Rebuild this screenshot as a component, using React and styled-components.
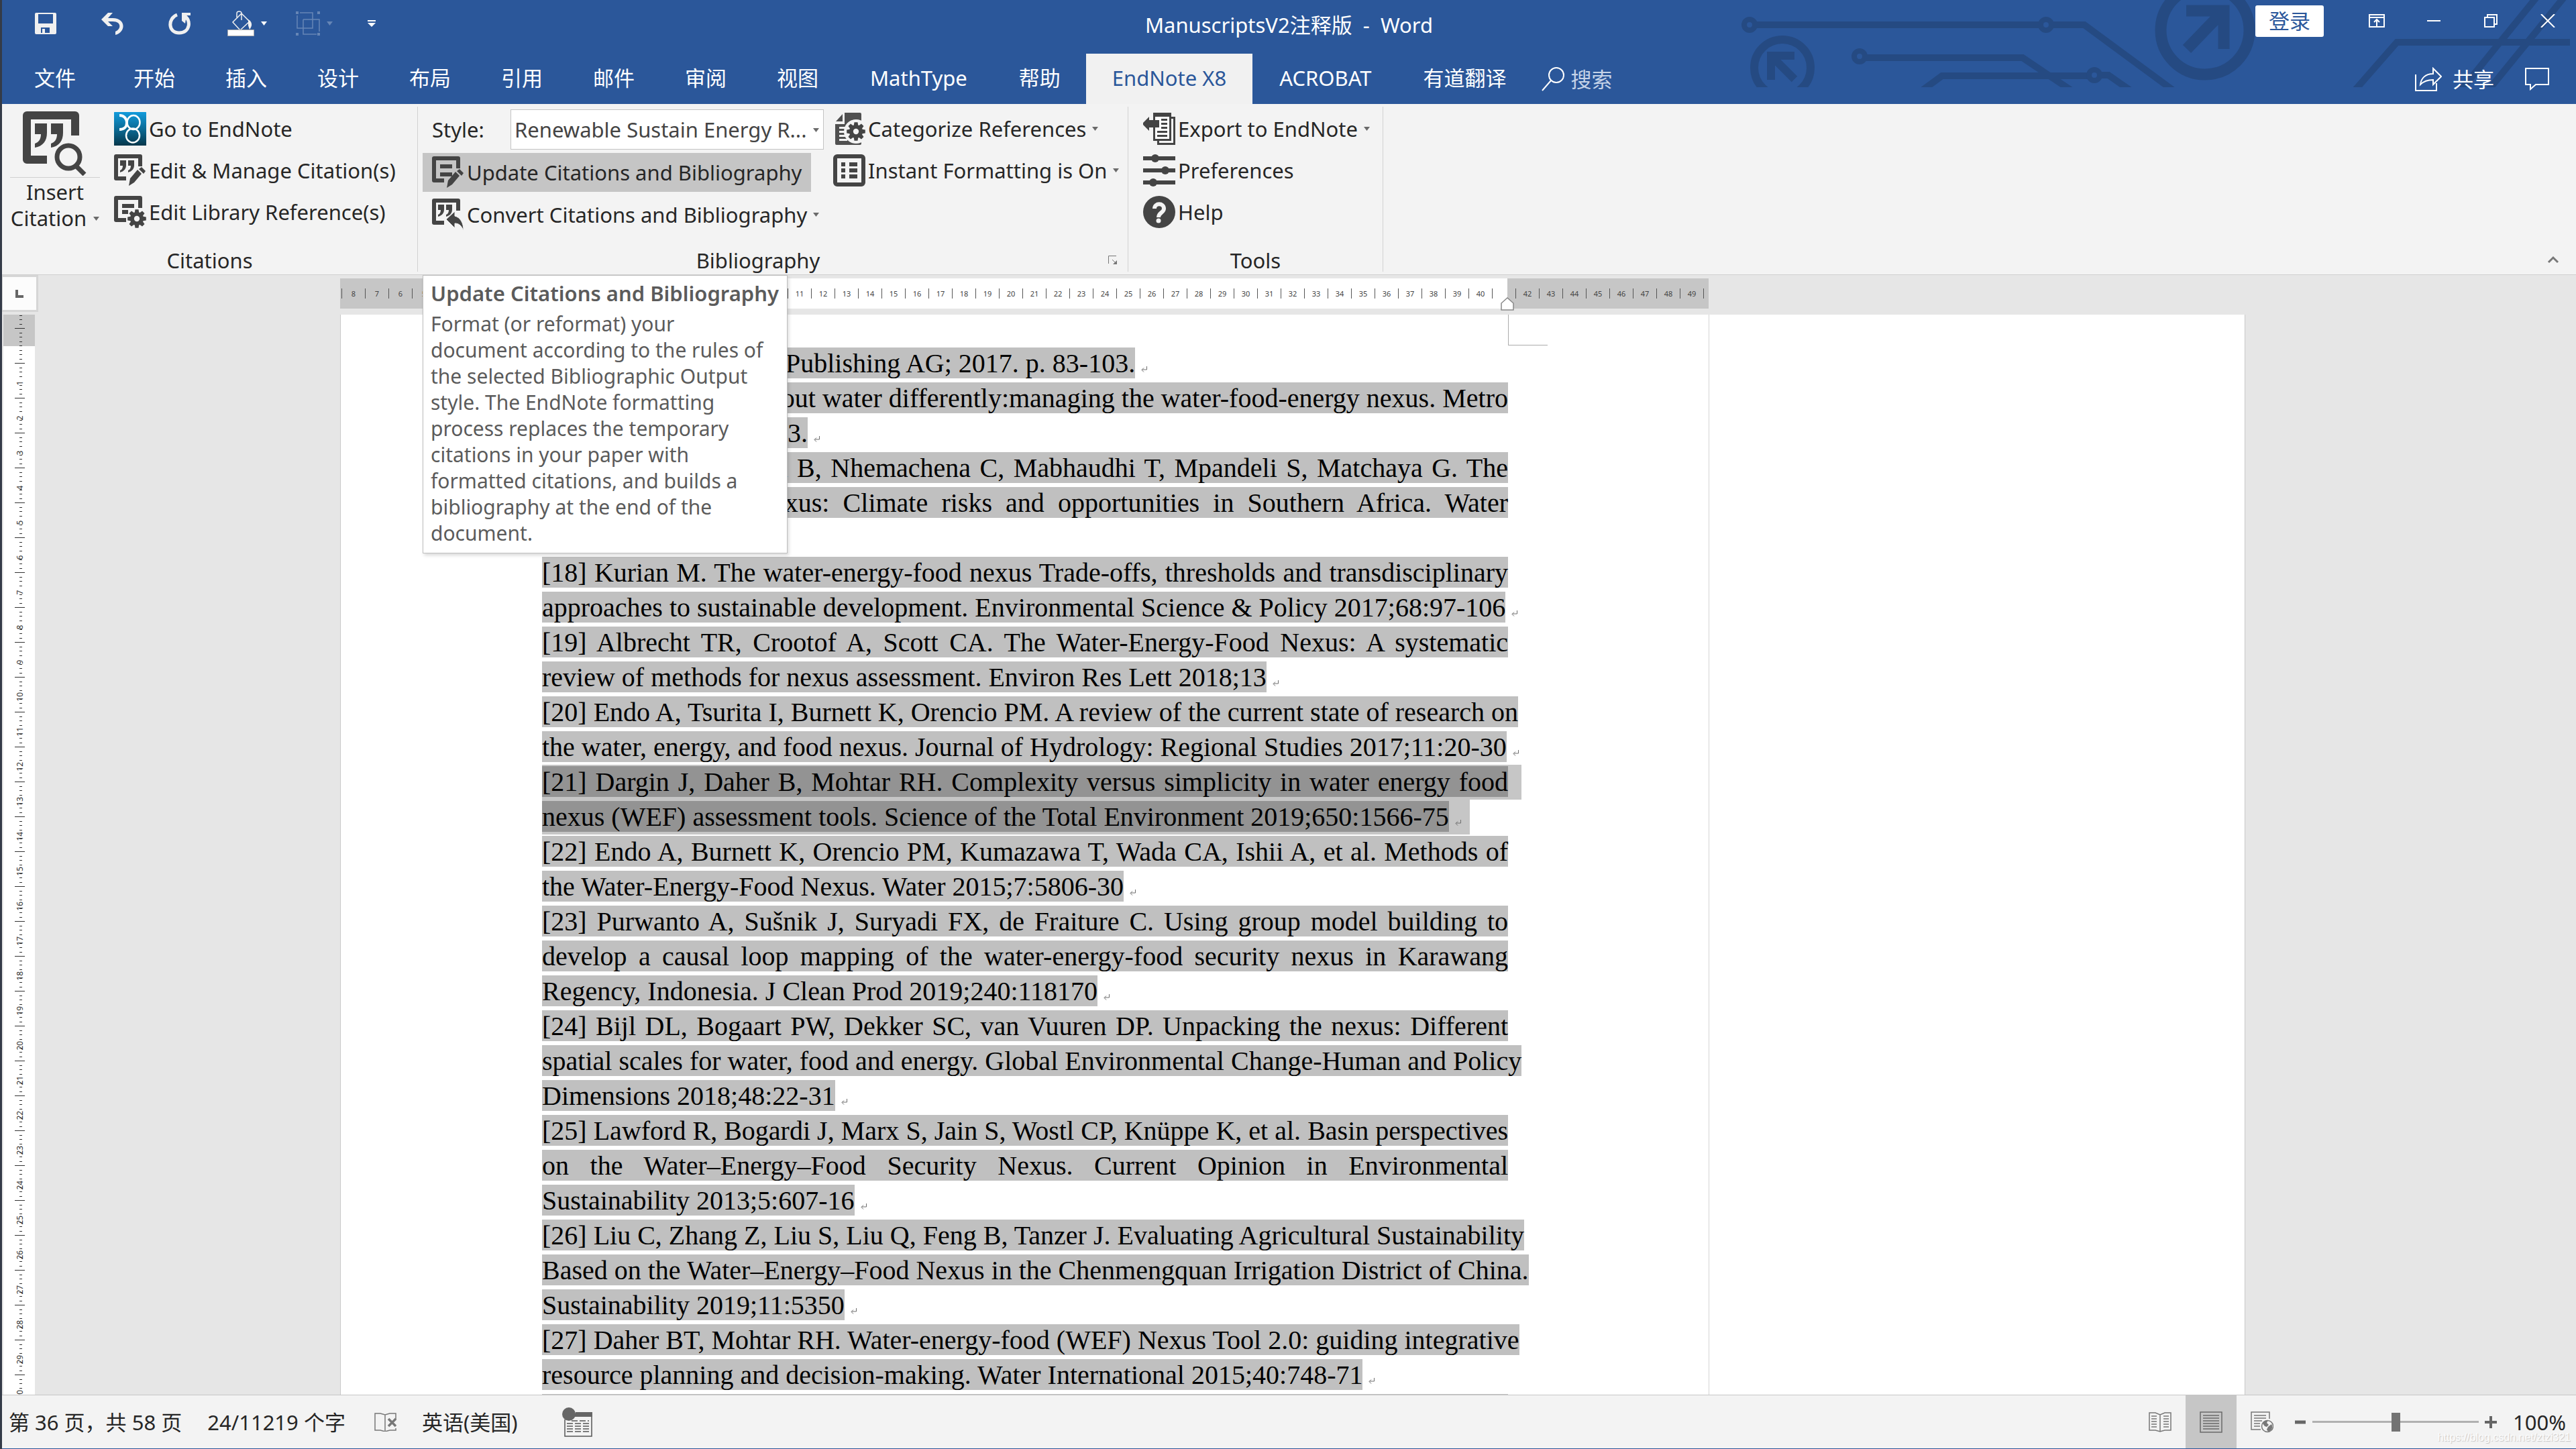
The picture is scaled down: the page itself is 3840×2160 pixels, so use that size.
import React from "react";
import styled, { createGlobalStyle, css } from "styled-components";

const ui = `"Noto Sans", "Noto Sans CJK SC", sans-serif`;
const blue = "#2b579a";
const ink = "#444444";

const Global = createGlobalStyle`
  * { box-sizing: border-box; }
  html, body { margin: 0; padding: 0; }
  body { font-family: ${ui}; font-size: 31px; line-height: 40px; color: #262626; overflow: hidden; }
  button, select, input { font: inherit; color: inherit; margin: 0; }
  svg { display: block; flex: none; }
`;

const Shell = styled.div`
  height: 100vh;
  display: flex;
  flex-direction: column;
  background: #e6e6e6;
  border-left: 3px solid #343b48;
`;

/* ---------- header ---------- */
const Header = styled.header`
  position: relative;
  background: ${blue};
  color: #fff;
`;
const Circuit = styled.svg`
  position: absolute;
  right: 0;
  top: 0;
`;
const TitleBar = styled.div`
  position: relative;
  display: grid;
  grid-template-columns: 1fr auto 1fr;
  height: 80px;
`;
const QuickAccess = styled.div`
  display: flex;
  height: 70px;
  padding-left: 15px;
`;
const PlainButton = styled.button`
  border: 0;
  background: none;
  padding: 0;
  display: flex;
  align-items: center;
  justify-content: center;
  white-space: nowrap;
`;
const QuickButton = styled(PlainButton)`
  width: ${(p) => (p.$narrow ? 72 : 100)}px;
  gap: 10px;
  opacity: ${(p) => (p.$dim ? 0.28 : 1)};
`;
const DocTitle = styled.h1`
  margin: 0;
  font-size: 31px;
  line-height: 74px;
  font-weight: 400;
  white-space: pre;
`;
const WindowArea = styled.div`
  display: flex;
  align-items: center;
  justify-content: flex-end;
  height: 62px;
`;
const SignIn = styled(PlainButton)`
  background: #fff;
  color: ${blue};
  width: 102px;
  height: 47px;
  border-radius: 3px;
  margin-right: 36px;
`;
const WindowButton = styled(PlainButton)`
  width: 85px;
  height: 62px;
`;
const TabRow = styled.nav`
  position: relative;
  display: flex;
  height: 75px;
  gap: 1px;
`;
const tabPadding = { file: 48, latin: 39, cjk: 37 };
const Tab = styled(PlainButton)`
  padding: 0 ${(p) => tabPadding[p.$kind]}px 4px;
  color: ${(p) => (p.$active ? blue : "#fff")};
  background: ${(p) => (p.$active ? "#f1f1f1" : "none")};
`;
const Search = styled(PlainButton)`
  margin-left: 14px;
  gap: 10px;
  color: #c5d3e8;
`;
const ShareArea = styled.div`
  display: flex;
  align-items: center;
  gap: 46px;
  margin-left: auto;
  padding-right: 40px;
`;
const ShareButton = styled(PlainButton)`
  gap: 16px;
`;

/* ---------- ribbon ---------- */
const Ribbon = styled.section`
  display: flex;
  height: 255px;
  padding: 4px 0;
  background: #f3f3f3;
  border-bottom: 1px solid #cfcfcf;
`;
const Group = styled.div`
  display: flex;
  flex-direction: column;
  flex: 0 0 ${(p) => p.$width}px;
  border-right: 1px solid #d2d2d2;
`;
const GroupBody = styled.div`
  display: flex;
  flex: 1;
  align-items: flex-start;
  padding-left: ${(p) => p.$inset}px;
  gap: ${(p) => p.$gap || 0}px;
`;
const GroupFooter = styled.div`
  display: flex;
  align-items: center;
  height: 40px;
  margin-bottom: -3px;
`;
const GroupLabel = styled.div`
  flex: 1;
  text-align: center;
`;
const Launcher = styled(PlainButton)`
  width: 44px;
  height: 40px;
`;
const Column = styled.div`
  display: flex;
  flex-direction: column;
  align-items: flex-start;
  padding-top: ${(p) => (p.$spaced ? 4 : 2)}px;
  gap: ${(p) => (p.$spaced ? 5 : 0)}px;
  ${(p) => p.$spaced && css`flex: 0 0 598px; min-width: 0;`}
`;
const Command = styled(PlainButton)`
  height: ${(p) => (p.$boxed ? 58 : 62)}px;
  gap: 4px;
  ${(p) => p.$boxed && css`padding: 0 14px;`}
  background: ${(p) => (p.$hot ? "#c5c5c5" : "none")};
`;
const Drop = styled.span`
  display: flex;
  padding-left: 5px;
`;
const BigCommand = styled(PlainButton)`
  flex-direction: column;
  width: 134px;
  padding-top: 7px;
`;
const BigLabel = styled.span`
  width: 100%;
  margin-top: 2px;
  padding-top: 2px;
  border-top: 1px solid #d0d0d0;
  line-height: 39px;
`;
const BigLine = styled.span`
  display: flex;
  align-items: center;
  justify-content: center;
  gap: 10px;
`;
const StyleRow = styled.div`
  display: flex;
  align-items: center;
  width: 100%;
  height: 60px;
  padding-left: 14px;
  justify-content: space-between;
`;
const SelectWrap = styled.div`
  position: relative;
  width: 467px;
`;
const StyleSelect = styled.select`
  appearance: none;
  display: block;
  width: 100%;
  height: 60px;
  padding: 0 0 0 5px;
  border: 1px solid #c3c3c3;
  border-radius: 0;
  background: #fff;
  color: #444;
`;
const SelectArrow = styled.span`
  position: absolute;
  right: 7px;
  top: 28px;
  pointer-events: none;
`;
const Collapse = styled(PlainButton)`
  margin-left: auto;
  align-self: flex-end;
  width: 68px;
  height: 36px;
`;

/* ---------- workspace ---------- */
const Workspace = styled.main`
  position: relative;
  flex: 1;
  min-height: 0;
  display: grid;
  grid-template-columns: 54px 1fr;
  grid-template-rows: 59px 1fr;
  overflow: hidden;
`;
const Corner = styled.div`
  display: flex;
  align-items: center;
  justify-content: center;
  height: 55px;
  background: #fcfcfc;
  border: solid #d6d6d6;
  border-width: 3px 3px 3px 1px;
`;
const Track = styled.div`
  display: flex;
  justify-content: center;
  padding-right: 43px;
  min-height: 0;
`;
const RulerSpan = styled.div`
  width: 2840px;
  padding-top: 5px;
`;
const HRuler = styled.div`
  position: relative;
  display: flex;
  align-items: center;
  width: 2040px;
  height: 45px;
  padding-left: 2px;
  background: linear-gradient(90deg, #c6c6c6 300px, #fff 300px, #fff 1740px, #c6c6c6 1740px);
`;
const HCell = styled.span`
  flex: 0 0 35px;
  height: 15px;
  border-left: 1px solid #555;
  color: #444;
  font-size: 11px;
  line-height: 15px;
  text-align: center;
`;
const Indent = styled.svg`
  position: absolute;
  left: 1730px;
  top: 28px;
`;
const VRuler = styled.div`
  margin: 0 5px 0 2px;
  min-height: 0;
  overflow: hidden;
  background: linear-gradient(#c6c6c6 47px, #fff 47px);
`;
const VUnits = styled.div`
  margin-top: -32px;
`;
const VUnit = styled.div`
  display: grid;
  grid-template-rows: repeat(8, 1fr);
  grid-template-columns: 47px;
  height: 52px;
  padding-left: 17px;
`;
const VTick = styled.i`
  grid-row: ${(p) => p.$row};
  grid-column: 1;
  height: 1px;
  width: ${(p) => (p.$long ? 15 : 4)}px;
  margin-left: ${(p) => (p.$long ? 0 : 7)}px;
  background: #333;
`;
const VNumber = styled.span`
  grid-row: 4 / 7;
  grid-column: 1;
  width: 15px;
  writing-mode: vertical-rl;
  transform: rotate(180deg);
  text-align: center;
  font-size: 12px;
  line-height: 15px;
  color: #333;
`;
const Pages = styled.div`
  display: flex;
  width: 2840px;
  background: #fff;
  border: solid #c8c8c8;
  border-width: 0 1px;
`;
const Sheet = styled.article`
  position: relative;
  flex: 0 0 2040px;
  padding: 47px 299px 0 300px;
  border-right: 1px solid #d4d4d4;
  font-family: "Liberation Serif", serif;
  font-size: 40px;
  line-height: 52px;
  color: #000;
  overflow: hidden;
`;
const MarginMark = styled.i`
  position: absolute;
  right: 240px;
  top: 0;
  width: 59px;
  height: 46px;
  border: solid #ababab;
  border-width: 0 0 1px 1px;
`;
const Line = styled.div`
  height: 52px;
  white-space: nowrap;
  ${(p) => p.$full && css`text-align-last: justify;`}
  ${(p) => p.$picked && css`
    width: ${p.$full ? "calc(100% + 20px)" : "fit-content"};
    padding-right: ${p.$full ? 20 : 13}px;
    background: #c6c6c6;
  `}
`;
const Field = styled.span`
  padding: 1px 0 0 ${(p) => p.$lead || 0}px;
  background: ${(p) => (p.$picked ? "#939393" : "#c0c0c0")};
  ${(p) => p.$block && css`display: block; margin-top: 2px;`}
`;
const Return = styled.svg`
  display: inline-block;
  margin-left: 9px;
`;
const Tooltip = styled.aside`
  position: absolute;
  z-index: 2;
  left: 627px;
  top: 0;
  width: 544px;
  padding: 7px 0 10px 11px;
  background: #fff;
  border: 1px solid #bebebe;
  box-shadow: 2px 3px 5px rgba(0, 0, 0, 0.15);
  color: #5b5b5b;
  font-size: 30px;
  line-height: 39px;
  white-space: nowrap;
`;
const TipTitle = styled.h2`
  margin: 0 0 6px;
  font-size: 31px;
  line-height: 39px;
  font-weight: 600;
`;
const TipBody = styled.p`
  margin: 0;
`;

/* ---------- status bar ---------- */
const Status = styled.footer`
  display: flex;
  align-items: center;
  height: 81px;
  background: #f3f3f3;
  border-top: 1px solid #c6c6c6;
  border-bottom: 1px solid ${blue};
`;
const StatusInfo = styled.div`
  display: flex;
  align-items: center;
  padding-left: 10px;
  gap: 38px;
  white-space: nowrap;
`;
const ProofButton = styled(PlainButton)`
  margin-left: 5px;
`;
const MacroButton = styled(PlainButton)`
  margin-left: 28px;
`;
const StatusView = styled.div`
  position: relative;
  display: flex;
  align-items: center;
  align-self: stretch;
  margin-left: auto;
  padding-right: 15px;
`;
const ViewButton = styled(PlainButton)`
  width: 76px;
  align-self: stretch;
  background: ${(p) => (p.$active ? "#c6c6c6" : "none")};
`;
const ZoomOut = styled(PlainButton)`
  margin: 0 10px 0 11px;
`;
const ZoomIn = styled(PlainButton)`
  margin: 0 24px 0 9px;
`;
const ZoomRange = styled.input`
  appearance: none;
  width: 248px;
  height: 28px;
  background: linear-gradient(#b0b0b0, #b0b0b0) center / 100% 3px no-repeat;
  &::-webkit-slider-thumb {
    appearance: none;
    width: 13px;
    height: 28px;
    background: #737373;
  }
`;
const Watermark = styled.span`
  position: absolute;
  right: 8px;
  bottom: 2px;
  font: 16px/28px "Liberation Sans", sans-serif;
  color: #fdfdfd;
  text-shadow: 1px 1px 1px #c4c4c4;
`;

/* ---------- icons ---------- */
const Caret = ({ color = "#6a6a6a" }) => (
  <svg width="9" height="6" viewBox="0 0 9 6"><path d="M0 0h9L4.500 6z" fill={color} /></svg>
);

const gearPoints = (cx, cy, r, teeth = 8) => {
  const pts = [];
  for (let i = 0; i < teeth; i++) {
    const a = (i / teeth) * Math.PI * 2 - Math.PI / 2;
    [[-0.32, 0.72], [-0.18, 1], [0.18, 1], [0.32, 0.72]].forEach(([d, k]) =>
      pts.push(`${(cx + Math.cos(a + d) * r * k).toFixed(1)},${(cy + Math.sin(a + d) * r * k).toFixed(1)}`)
    );
  }
  return pts.join(" ");
};
const Gear = ({ cx, cy, r, hole }) => (
  <>
    <polygon points={gearPoints(cx, cy, r)} fill={ink} />
    <circle cx={cx} cy={cy} r={r * 0.3} fill={hole} />
  </>
);
const Frame = () => <path d="M39 18V3H3V36H18" fill="none" stroke={ink} strokeWidth="6" strokeLinejoin="round" />;
const Quotes = () => (
  <path fill={ink} d="M9 9h9v7c0 6-3 9-9 11v-3c3-1 4-4 4-7H9zM21 9h9v7c0 6-3 9-9 11v-3c3-1 4-4 4-7h-4z" />
);
const Pencil = () => (
  <>
    <path d="M24 36l11-13 6 6-11 13-8 5z" fill={ink} />
    <path d="M37 22l4-3 6 6-3 4z" fill={ink} />
  </>
);
const Icon48 = ({ children }) => <svg width="48" height="48" viewBox="0 0 48 48">{children}</svg>;

const InsertIcon = () => (
  <svg width="96" height="96" viewBox="0 0 96 96">
    <path d="M78 36V6H6V72H36" fill="none" stroke={ink} strokeWidth="12" strokeLinejoin="round" />
    <path fill={ink} d="M18 18h18v14c0 12-6 20-18 22v-6c6-2 9-7 9-14h-9zM42 18h18v14c0 12-6 20-18 22v-6c6-2 9-7 9-14h-9z" />
    <circle cx="68" cy="68" r="17" fill="#f3f3f3" stroke={ink} strokeWidth="7" />
    <path d="M80 82L92 94" stroke={ink} strokeWidth="7" />
  </svg>
);
const EndNoteIcon = () => (
  <svg width="48" height="50" viewBox="1 0 48 50">
    <defs>
      <linearGradient id="en" x1="0" y1="0" x2="0" y2="1">
        <stop offset="0" stopColor="#129bdc" /><stop offset="0.55" stopColor="#0a668f" /><stop offset="1" stopColor="#05374b" />
      </linearGradient>
    </defs>
    <rect width="50" height="50" rx="2" fill="url(#en)" />
    <g fill="none" stroke="#fff">
      <ellipse cx="30" cy="15.500" rx="9.500" ry="10.500" strokeWidth="2.500" />
      <ellipse cx="29" cy="35" rx="10" ry="10.500" strokeWidth="2.500" />
      <path d="M9 5c8 0 11 6 11 11S17 26 9 26" strokeWidth="4" />
    </g>
  </svg>
);
const EditCiteIcon = () => <Icon48><Frame /><Quotes /><Pencil /></Icon48>;
const EditLibIcon = () => (
  <Icon48>
    <Frame />
    <path d="M12 12h18v6H12zM12 21h9v6h-9z" fill={ink} />
    <Gear cx={34} cy={34} r={14} hole="#f3f3f3" />
  </Icon48>
);
const UpdateIcon = () => <Icon48><Frame /><path d="M12 12h18v6H12zM12 24h18v6H12z" fill={ink} /><Pencil /></Icon48>;
const ConvertIcon = () => (
  <Icon48>
    <Frame /><Quotes />
    <path d="M21 31L34 19v7c8 2 13 10 13 22-3-7-6-11-13-11v7z" fill={ink} stroke="#f3f3f3" strokeWidth="1" />
  </Icon48>
);
const CategorizeIcon = () => (
  <Icon48>
    <path d="M17 0h23q2 0 2 2v44q0 2-2 2H5q-2 0-2-2V17h14zM14 2v11H4z" fill="#505050" />
    <path d="M9 21h12v3H9zM9 27h10v3H9zM9 33h10v3H9zM9 39h12v3H9z" fill="#f3f3f3" />
    <circle cx="34" cy="28" r="18" fill="#f3f3f3" />
    <Gear cx={34} cy={28} r={14} hole="#f3f3f3" />
  </Icon48>
);
const InstantIcon = () => (
  <Icon48>
    <rect x="3" y="3" width="42" height="42" rx="3" fill="none" stroke={ink} strokeWidth="6" />
    <path fill={ink} d="M12 12h6v6h-6zM24 12h12v6H24zM12 21h6v6h-6zM24 21h12v6H24zM12 30h6v6h-6zM24 30h12v6H24z" />
  </Icon48>
);
const ExportIcon = () => (
  <Icon48>
    <path d="M22 7.500h24.500v39H22.500z" fill="#f3f3f3" stroke={ink} strokeWidth="3" />
    <path d="M16.500 1.500h24v39h-24z" fill="#fff" stroke={ink} strokeWidth="3" />
    <path fill={ink} d="M16 0h26v6H16zM27 9h9v3h-9zM27 15h9v3h-9zM27 21h9v3h-9zM21 27h15v3H21zM21 33h15v3H21zM0 15l9-9v5h15v11H9v5L0 18z" />
  </Icon48>
);
const PrefIcon = () => (
  <Icon48>
    <path d="M0 3h48v6H0zM0 21h48v6H0zM0 39h48v6H0z" fill={ink} />
    <circle cx="18" cy="6" r="6" fill={ink} /><circle cx="33" cy="24" r="6" fill={ink} /><circle cx="15" cy="42" r="6" fill={ink} />
  </Icon48>
);
const HelpIcon = () => (
  <Icon48>
    <circle cx="24" cy="24" r="24" fill={ink} />
    <path d="M17 19c0-9 14-9 14 0 0 6-8 6-8 13" fill="none" stroke="#f3f3f3" strokeWidth="6" />
    <circle cx="23" cy="37" r="3.500" fill="#f3f3f3" />
  </Icon48>
);

const SaveIcon = () => (
  <svg width="32" height="32" viewBox="0 0 32 32">
    <path fillRule="evenodd" fill="#f0f0f0" d="M2 0h28q2 0 2 2v28q0 2-2 2H2q-2 0-2-2V2q0-2 2-2zM5 2v14h22V2zM9 22v8h2v-6h4v6h7v-8z" />
  </svg>
);
const UndoIcon = () => (
  <svg width="34" height="33" viewBox="0 0 34 33">
    <path d="M10 0h7l-7 8h7c20 0 20 21 4 25v-5c9-4 9-15-4-15h-7l7 7h-7L0 10z" fill="#f0f0f0" />
  </svg>
);
const RedoIcon = () => (
  <svg width="34" height="33" viewBox="0 0 34 33">
    <path d="M13 3C-1 8-1 30 16 30s18-20 8-25" fill="none" stroke="#f0f0f0" strokeWidth="5" />
    <path d="M20 0h13v4h-6l-2 12-5-4z" fill="#f0f0f0" />
  </svg>
);
const BucketIcon = () => (
  <svg width="40" height="38" viewBox="0 0 40 38">
    <path d="M21 4L8 17l11 12L33 16zM14 10V4c0-4 7-4 7 0v10" fill="none" stroke="#f0f0f0" strokeWidth="1.500" />
    <path d="M31 13c7 4 6 10 2 15l-2-6z" fill="#f0f0f0" />
    <path d="M.5 28.500h39v9H.5z" fill="#fff" stroke="#aaa" />
  </svg>
);
const GroupIcon = () => (
  <svg width="36" height="36" viewBox="0 0 36 36" fill="none" stroke="#fff" strokeWidth="1.500">
    <path d="M2 6v19h23V2H6M11 12h24v18M11 12v22h20" />
    <path d="M0 2h4M32 2h4M0 34h4M32 34h4" strokeWidth="4" />
  </svg>
);
const CustomizeIcon = () => (
  <svg width="12" height="11" viewBox="0 0 12 11"><path d="M0 0h12v2H0zM0 4h12l-6 6z" fill="#fff" /></svg>
);
const win = { width: 24, height: 20, fill: "none", stroke: "#fff", strokeWidth: 2 };
const ReadIcon = () => (
  <svg width="34" height="30" viewBox="0 0 34 30" fill="none" stroke="#777" strokeWidth="1.500">
    <path d="M1 1h9l7 3 7-3h9v26h-9l-7 2-7-2H1zM17 4v25M4 6h8M4 10h8M4 14h8M4 18h8M4 22h8M22 6h8M22 10h8M22 14h8M22 18h8M22 22h8" />
  </svg>
);
const PrintIcon = () => (
  <svg width="34" height="32" viewBox="0 0 34 32" fill="none" stroke="#6a6a6a" strokeWidth="1.500">
    <path d="M1 1h32v30H1zM5 6h24M5 10h24M5 14h24M5 18h24M5 22h24M5 26h24" />
  </svg>
);
const WebIcon = () => (
  <svg width="34" height="32" viewBox="0 0 34 32" fill="none" stroke="#777" strokeWidth="1.500">
    <path d="M15 27H1V1h27v10M5 6h18M5 10h18M5 14h12M5 18h9M5 22h9" />
    <circle cx="25" cy="22" r="8.500" fill="#f3f3f3" />
    <path d="M18 18c3-5 6-5 8-5l-2 4 3 3-3 3-3-1zM26 23l5-4c3 5 0 10-5 11l-2-3z" fill="#777" stroke="none" />
  </svg>
);
const ProofIcon = () => (
  <svg width="33" height="28" viewBox="0 0 33 28" fill="none" stroke="#777" strokeWidth="1.500">
    <path d="M32 10V1h-9l-7 2-7-2H1v25h8l7 2 7-2h9v-3M16 3v25" />
    <path d="M21 9l11 11M32 9L21 20" strokeWidth="3.500" />
  </svg>
);
const MacroIcon = () => (
  <svg width="45" height="44" viewBox="0 0 45 44" fill="none" stroke="#555" strokeWidth="1.500">
    <path d="M4 18v25h40V8H20" />
    <path d="M20 7h25v7H18z" fill="#666" stroke="none" />
    <path d="M14 20h26M7 24h33M7 28h33M7 32h33M7 36h33" strokeDasharray="9 3" />
    <circle cx="10" cy="10" r="10" fill="#666" stroke="none" />
  </svg>
);

const CircuitArt = () => (
  <Circuit width="1250" height="130" viewBox="2590 0 1250 130" fill="none" stroke="#254a82" strokeWidth="10" aria-hidden="true">
    <circle cx="2608" cy="37" r="8" strokeWidth="8" />
    <circle cx="3050" cy="37" r="8" strokeWidth="8" />
    <path d="M2618 37H3040M3060 37H3107L3240 135" />
    <circle cx="2772" cy="84" r="8" strokeWidth="8" />
    <path d="M2782 86H3015L3088 135M2865 135L2895 113H3112" />
    <circle cx="3122" cy="112" r="8" strokeWidth="8" />
    <path d="M3132 112H3143L3176 135" />
    <circle cx="2657" cy="101" r="42" strokeWidth="12" />
    <path d="M2640 119V83H2675M2642 85L2675 118" strokeWidth="12" />
    <circle cx="3287" cy="45" r="66" strokeWidth="17" />
    <path d="M3259 16H3315V73M3312 19L3260 73" strokeWidth="17" />
    <path d="M3510 135L3573 63H3831M3782 -5L3668 135M3823 -5L3709 135" />
  </Circuit>
);

/* ---------- data ---------- */
const tabs = ["文件", "开始", "插入", "设计", "布局", "引用", "邮件", "审阅", "视图", "MathType", "帮助", "EndNote X8", "ACROBAT", "有道翻译"];
const tabKind = (t) => (t === "文件" ? "file" : /^[A-Z]/.test(t) ? "latin" : "cjk");

const lines = [
  { t: "Publishing AG; 2017. p. 83-103.", lead: 363, end: true },
  { t: "about water differently:managing the water-food-energy nexus. Metro", lead: 319 },
  { t: "3.", lead: 366, end: true },
  { t: "Ndlela B, Nhemachena C, Mabhaudhi T, Mpandeli S, Matchaya G. The", lead: 260 },
  { t: "nexus: Climate risks and opportunities in Southern Africa. Water", lead: 324 },
  { t: "" },
  { t: "[18] Kurian M. The water-energy-food nexus Trade-offs, thresholds and transdisciplinary" },
  { t: "approaches to sustainable development. Environmental Science & Policy 2017;68:97-106", end: true },
  { t: "[19] Albrecht TR, Crootof A, Scott CA. The Water-Energy-Food Nexus: A systematic" },
  { t: "review of methods for nexus assessment. Environ Res Lett 2018;13", end: true },
  { t: "[20] Endo A, Tsurita I, Burnett K, Orencio PM. A review of the current state of research on" },
  { t: "the water, energy, and food nexus. Journal of Hydrology: Regional Studies 2017;11:20-30", end: true },
  { t: "[21] Dargin J, Daher B, Mohtar RH. Complexity versus simplicity in water energy food", picked: true },
  { t: "nexus (WEF) assessment tools. Science of the Total Environment 2019;650:1566-75", picked: true, end: true },
  { t: "[22] Endo A, Burnett K, Orencio PM, Kumazawa T, Wada CA, Ishii A, et al. Methods of" },
  { t: "the Water-Energy-Food Nexus. Water 2015;7:5806-30", end: true },
  { t: "[23] Purwanto A, Sušnik J, Suryadi FX, de Fraiture C. Using group model building to" },
  { t: "develop a causal loop mapping of the water-energy-food security nexus in Karawang" },
  { t: "Regency, Indonesia. J Clean Prod 2019;240:118170", end: true },
  { t: "[24] Bijl DL, Bogaart PW, Dekker SC, van Vuuren DP. Unpacking the nexus: Different" },
  { t: "spatial scales for water, food and energy. Global Environmental Change-Human and Policy" },
  { t: "Dimensions 2018;48:22-31", end: true },
  { t: "[25] Lawford R, Bogardi J, Marx S, Jain S, Wostl CP, Knüppe K, et al. Basin perspectives" },
  { t: "on the Water–Energy–Food Security Nexus. Current Opinion in Environmental" },
  { t: "Sustainability 2013;5:607-16", end: true },
  { t: "[26] Liu C, Zhang Z, Liu S, Liu Q, Feng B, Tanzer J. Evaluating Agricultural Sustainability" },
  { t: "Based on the Water–Energy–Food Nexus in the Chenmengquan Irrigation District of China." },
  { t: "Sustainability 2019;11:5350", end: true },
  { t: "[27] Daher BT, Mohtar RH. Water-energy-food (WEF) Nexus Tool 2.0: guiding integrative" },
  { t: "resource planning and decision-making. Water International 2015;40:748-71", end: true },
];

const Item = ({ icon, children, drop, ...rest }) => (
  <Command type="button" {...rest}>
    {icon}
    {children}
    {drop && <Drop><Caret /></Drop>}
  </Command>
);

export default function App() {
  return (
    <Shell>
      <Global />
      <Header>
        <CircuitArt />
        <TitleBar>
          <QuickAccess>
            <QuickButton aria-label="保存"><SaveIcon /></QuickButton>
            <QuickButton aria-label="撤消"><UndoIcon /></QuickButton>
            <QuickButton aria-label="重复"><RedoIcon /></QuickButton>
            <QuickButton aria-label="填充"><BucketIcon /><Caret color="#fff" /></QuickButton>
            <QuickButton aria-label="组合" $dim><GroupIcon /><Caret color="#fff" /></QuickButton>
            <QuickButton aria-label="自定义" $narrow><CustomizeIcon /></QuickButton>
          </QuickAccess>
          <DocTitle>{"ManuscriptsV2注释版  -  Word"}</DocTitle>
          <WindowArea>
            <SignIn type="button">登录</SignIn>
            <WindowButton aria-label="功能区显示选项">
              <svg {...win}><path d="M1 1h22v18H1zM1 5h22M12 18V9M8 12l4-4 4 4" /></svg>
            </WindowButton>
            <WindowButton aria-label="最小化"><svg {...win}><path d="M2 10h20" /></svg></WindowButton>
            <WindowButton aria-label="还原">
              <svg {...win}><path d="M3 5h14v14H3zM7 5V1h14v14h-4" /></svg>
            </WindowButton>
            <WindowButton aria-label="关闭"><svg {...win}><path d="M2 0l20 20M22 0L2 20" /></svg></WindowButton>
          </WindowArea>
        </TitleBar>
        <TabRow>
          {tabs.map((t) => (
            <Tab type="button" key={t} $kind={tabKind(t)} $active={t === "EndNote X8"}>{t}</Tab>
          ))}
          <Search type="button">
            <svg width="34" height="36" viewBox="0 0 34 36" fill="none" stroke="#fff" strokeWidth="2">
              <circle cx="22" cy="12" r="11" /><path d="M14 20L1 35" />
            </svg>
            搜索
          </Search>
          <ShareArea>
            <ShareButton type="button">
              <svg width="40" height="36" viewBox="0 0 40 36" fill="none" stroke="#fff" strokeWidth="2">
                <path d="M1 11v24h31V24M27 2l12 12-12 12v-7c-9 0-14 2-19 7 1-9 7-16 19-16z" />
              </svg>
              共享
            </ShareButton>
            <PlainButton aria-label="批注">
              <svg width="36" height="34" viewBox="0 0 36 34" fill="none" stroke="#fff" strokeWidth="2">
                <path d="M1 1h34v24H16l-8 7v-7H1z" />
              </svg>
            </PlainButton>
          </ShareArea>
        </TabRow>
      </Header>

      <Ribbon>
        <Group $width={620}>
          <GroupBody $inset={12} $gap={21}>
            <BigCommand type="button">
              <InsertIcon />
              <BigLabel>
                <BigLine>Insert</BigLine>
                <BigLine>Citation <Caret /></BigLine>
              </BigLabel>
            </BigCommand>
            <Column>
              <Item icon={<EndNoteIcon />}>Go to EndNote</Item>
              <Item icon={<EditCiteIcon />}>Edit &amp; Manage Citation(s)</Item>
              <Item icon={<EditLibIcon />}>Edit Library Reference(s)</Item>
            </Column>
          </GroupBody>
          <GroupFooter><GroupLabel>Citations</GroupLabel></GroupFooter>
        </Group>
        <Group $width={1059}>
          <GroupBody $inset={7} $gap={14}>
            <Column $spaced>
              <StyleRow>
                <label htmlFor="style">Style:</label>
                <SelectWrap>
                  <StyleSelect id="style"><option>Renewable Sustain Energy R...</option></StyleSelect>
                  <SelectArrow><Caret /></SelectArrow>
                </SelectWrap>
              </StyleRow>
              <Item icon={<UpdateIcon />} $boxed $hot>Update Citations and Bibliography</Item>
              <Item icon={<ConvertIcon />} $boxed drop>Convert Citations and Bibliography</Item>
            </Column>
            <Column>
              <Item icon={<CategorizeIcon />} drop>Categorize References</Item>
              <Item icon={<InstantIcon />} drop>Instant Formatting is On</Item>
            </Column>
          </GroupBody>
          <GroupFooter>
            <GroupLabel>Bibliography</GroupLabel>
            <Launcher aria-label="Bibliography options">
              <svg width="14" height="14" viewBox="0 0 14 14"><path d="M.5 12V.5H12M6 6l5 5" fill="none" stroke="#777" /><path d="M13 7v6H7z" fill="#777" /></svg>
            </Launcher>
          </GroupFooter>
        </Group>
        <Group $width={380}>
          <GroupBody $inset={22}>
            <Column>
              <Item icon={<ExportIcon />} drop>Export to EndNote</Item>
              <Item icon={<PrefIcon />}>Preferences</Item>
              <Item icon={<HelpIcon />}>Help</Item>
            </Column>
          </GroupBody>
          <GroupFooter><GroupLabel>Tools</GroupLabel></GroupFooter>
        </Group>
        <Collapse aria-label="折叠功能区">
          <svg width="18" height="12" viewBox="0 0 18 12"><path d="M2 10l7-7 7 7" fill="none" stroke="#777" strokeWidth="3" /></svg>
        </Collapse>
      </Ribbon>

      <Workspace>
        <Corner>
          <svg width="12" height="12" viewBox="0 0 12 12"><path d="M2 0v10h10" fill="none" stroke="#666" strokeWidth="4" /></svg>
        </Corner>
        <Track>
          <RulerSpan>
            <HRuler>
              {Array.from({ length: 59 }, (_, i) => {
                const n = Math.abs(i - 8);
                return <HCell key={i}>{i === 8 || n === 41 || i === 58 ? "" : n}</HCell>;
              })}
              <Indent width="20" height="20" viewBox="0 0 20 20"><path d="M1 19V9l9-8 9 8v10z" fill="#fff" stroke="#888" strokeWidth="1.500" /></Indent>
            </HRuler>
          </RulerSpan>
        </Track>
        <VRuler>
          <VUnits>
            {Array.from({ length: 32 }, (_, i) => (
              <VUnit key={i}>
                <VTick $row={1} $long />
                {[2, 3, 4, 6, 7, 8].map((r) => <VTick key={r} $row={r} />)}
                {i > 1 ? <VNumber>{i - 1}</VNumber> : <VTick $row={5} />}
              </VUnit>
            ))}
          </VUnits>
        </VRuler>
        <Track>
          <Pages>
            <Sheet>
              <MarginMark />
              {lines.map((l, i) => (
                <Line key={i} $full={!l.end && l.t !== ""} $picked={l.picked}>
                  {l.t && <Field $lead={l.lead} $picked={l.picked}>{l.t}</Field>}
                  {l.end && (
                    <Return width="9" height="9" viewBox="0 0 9 9"><path d="M8.500 0v5h-7M4 2.500L1 5.500 4 8.500" fill="none" stroke="#6e6e6e" /></Return>
                  )}
                </Line>
              ))}
              <Line><Field $block>&nbsp;</Field></Line>
            </Sheet>
          </Pages>
        </Track>
        <Tooltip role="tooltip">
          <TipTitle>Update Citations and Bibliography</TipTitle>
          <TipBody>
            Format (or reformat) your<br />document according to the rules of<br />the selected Bibliographic Output<br />
            style. The EndNote formatting<br />process replaces the temporary<br />citations in your paper with<br />
            formatted citations, and builds a<br />bibliography at the end of the<br />document.
          </TipBody>
        </Tooltip>
      </Workspace>

      <Status>
        <StatusInfo>
          <span>第 36 页，共 58 页</span>
          <span>24/11219 个字</span>
          <ProofButton aria-label="校对"><ProofIcon /></ProofButton>
          <span>英语(美国)</span>
          <MacroButton aria-label="宏"><MacroIcon /></MacroButton>
        </StatusInfo>
        <StatusView>
          <ViewButton aria-label="阅读视图"><ReadIcon /></ViewButton>
          <ViewButton aria-label="页面视图" $active><PrintIcon /></ViewButton>
          <ViewButton aria-label="Web 版式视图"><WebIcon /></ViewButton>
          <ZoomOut aria-label="缩小"><svg width="16" height="18" viewBox="0 0 16 18"><path d="M0 9h16" stroke="#666" strokeWidth="5" /></svg></ZoomOut>
          <ZoomRange type="range" aria-label="缩放" min="0" max="100" defaultValue="50" />
          <ZoomIn aria-label="放大"><svg width="18" height="18" viewBox="0 0 18 18"><path d="M0 9h18M9 0v18" stroke="#666" strokeWidth="4" /></svg></ZoomIn>
          <span>100%</span>
          <Watermark>https://blog.csdn.net/ztzi321</Watermark>
        </StatusView>
      </Status>
    </Shell>
  );
}
